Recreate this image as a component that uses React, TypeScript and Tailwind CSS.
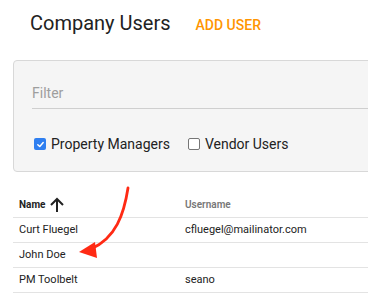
import React from "react";

function Check({ checked }: { checked: boolean }) {
  return checked ? (
    <span className="flex h-[12px] w-[12px] shrink-0 items-center justify-center rounded-[2px] bg-[#2f7ff0]">
      <svg width="9" height="9" viewBox="0 0 10 10">
        <path d="M2 5.2 L4.2 7.3 L8 2.8" fill="none" stroke="#fff" strokeWidth="1.6" strokeLinecap="round" strokeLinejoin="round" />
      </svg>
    </span>
  ) : (
    <span className="block h-[12px] w-[12px] shrink-0 rounded-[2px] border border-[#767676] bg-white" />
  );
}

const rows = [
  { name: "Curt Fluegel", user: "cfluegel@mailinator.com" },
  { name: "John Doe", user: "" },
  { name: "PM Toolbelt", user: "seano" },
];

export default function App() {
  return (
    <div
      className="relative h-[294px] w-[368px] overflow-hidden bg-white text-[#222]"
      style={{ fontFamily: "Roboto, 'Liberation Sans', sans-serif" }}
    >
      <div className="flex items-baseline gap-[25px] pl-[30px] pt-[11px]">
        <div className="text-[20px] leading-[24px] text-[#222]">Company Users</div>
        <div className="text-[14px] font-medium leading-[24px] text-[#ff9500]">ADD USER</div>
      </div>

      <div className="ml-[13px] mt-[23px] h-[112px] w-[380px] rounded-[4px] border border-[#d8d8d8] bg-[#f5f5f5] pl-[18px]">
        <div className="mt-[22px] border-b border-[#cfcfcf] pb-[5px] text-[14px] leading-[20px] text-[#9e9e9e]">
          Filter
        </div>
        <div className="mt-[25px] flex items-center text-[14px] leading-[20px] text-[#222]">
          <div className="ml-[2px] flex">
            <Check checked />
          </div>
          <span className="ml-[5px]">Property Managers</span>
          <div className="ml-[18px] flex">
            <Check checked={false} />
          </div>
          <span className="ml-[5px]">Vendor Users</span>
        </div>
      </div>

      <div className="ml-[13px] mt-[20px] w-[380px]">
        <div className="flex h-[26px] items-center border-b border-[#e3e3e3]">
          <div className="flex w-[172px] items-center pl-[6px] text-[10px] font-bold text-[#222]">
            Name
            <svg className="ml-[4px]" width="16" height="16" viewBox="0 0 16 16">
              <path d="M8 15 V2 M2 8 L8 2 L14 8" fill="none" stroke="#222" strokeWidth="2" />
            </svg>
          </div>
          <div className="text-[10px] font-semibold text-[#777]">Username</div>
        </div>
        {rows.map((r) => (
          <div key={r.name} className="flex h-[25px] items-center border-b border-[#e3e3e3] text-[11px] text-[#222]">
            <div className="w-[172px] pl-[6px]">{r.name}</div>
            <div>{r.user}</div>
          </div>
        ))}
      </div>

      <svg className="pointer-events-none absolute left-0 top-0" width="368" height="294" viewBox="0 0 368 294">
        <path d="M128 188 C 124 214, 116 238, 91 249" fill="none" stroke="#ff2a14" strokeWidth="2.8" strokeLinecap="round" />
        <polygon points="79,252 95,242 97,258" fill="#ff2a14" />
      </svg>
    </div>
  );
}
